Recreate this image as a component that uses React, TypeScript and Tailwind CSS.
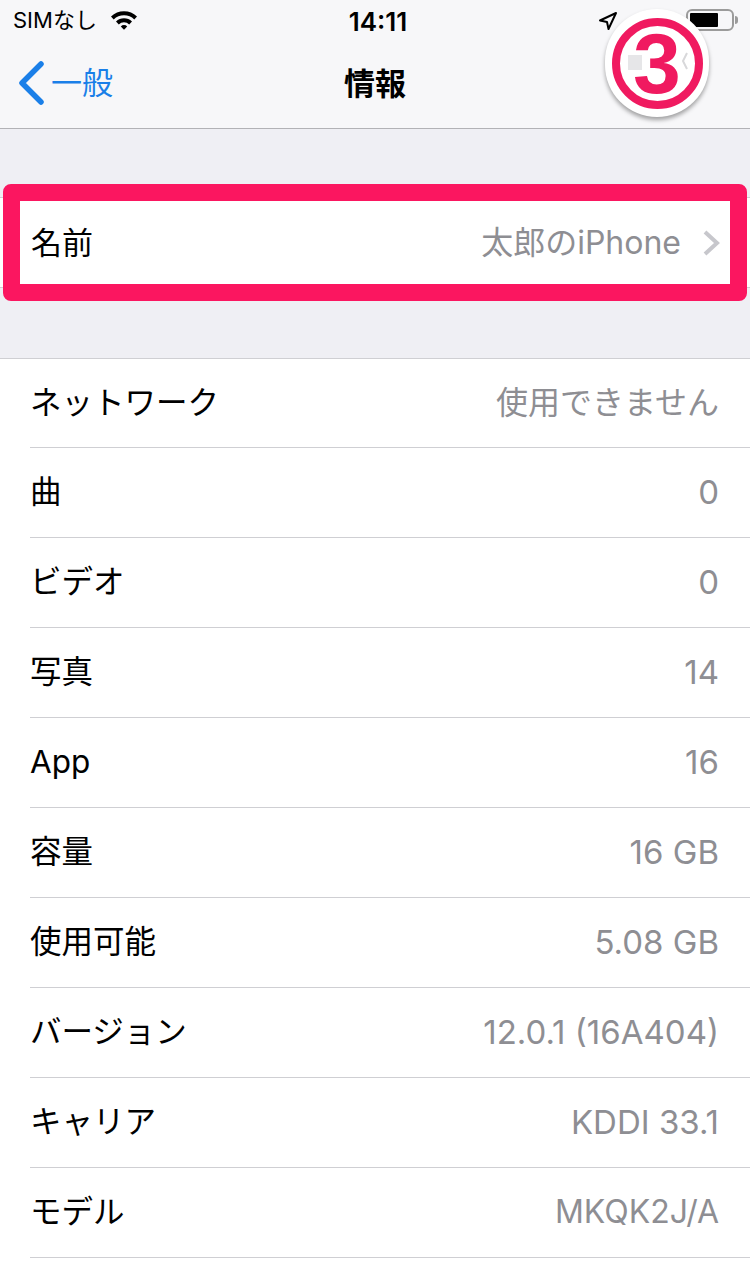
const font = { fontFamily: '"Inter", "Noto Sans CJK JP", sans-serif' };

const rows = [
  ["ネットワーク", "使用できません", "text-[32px]"],
  ["曲", "0", "text-[33px]"],
  ["ビデオ", "0", "text-[33px]"],
  ["写真", "14", "text-[33px]"],
  ["App", "16", "text-[33px]"],
  ["容量", "16 GB", "text-[33px]"],
  ["使用可能", "5.08 GB", "text-[33px]"],
  ["バージョン", "12.0.1 (16A404)", "text-[33px]"],
  ["キャリア", "KDDI 33.1", "text-[33px]"],
  ["モデル", "MKQK2J/A", "text-[32px]"],
];

function Wifi() {
  return (
    <svg width="28" height="22" viewBox="0 0 28 22">
      <path d="M1 7.5 A19 19 0 0 1 27 7.5 L24.3 10.4 A15 15 0 0 0 3.7 10.4 Z" fill="#000" />
      <path d="M6 12.5 A11.5 11.5 0 0 1 22 12.5 L19.2 15.4 A7.5 7.5 0 0 0 8.8 15.4 Z" fill="#000" />
      <path d="M10.8 17.4 A4.6 4.6 0 0 1 17.2 17.4 L14 20.8 Z" fill="#000" />
    </svg>
  );
}

function Battery() {
  return (
    <div className="flex items-center gap-[1px]">
      <div className="w-[48px] h-[22px] rounded-[6px] border-2 border-[#9b9b9b] p-[2px]">
        <div className="w-[28px] h-full bg-black rounded-[1px]" />
      </div>
      <div className="w-[3px] h-[8px] bg-[#9b9b9b] rounded-r-sm" />
    </div>
  );
}

function Badge() {
  return (
    <div className="absolute left-[605px] top-[9px] w-[104px] h-[108px] rounded-full bg-white shadow-[0_3px_4px_rgba(0,0,0,0.35)] flex items-center justify-center">
      <div className="relative w-[91px] h-[91px] rounded-full border-[8px] border-[#f01a60] flex items-center justify-center">
        {/* what is left of the status bar under the sticker */}
        <div className="absolute left-[8px] top-[29px] w-[14px] h-[15px] bg-[#e6e6e8]" />
        <svg className="absolute left-[61px] top-[26px]" width="8" height="18" viewBox="0 0 8 18">
          <path d="M6 1 L2 9 L6 17" fill="none" stroke="#d8d8da" strokeWidth="2" />
        </svg>
        <span className="relative text-[#f01a60] text-[86px] font-bold leading-none" style={{ fontFamily: '"Liberation Sans", sans-serif' }}>3</span>
      </div>
    </div>
  );
}

export default function App() {
  return (
    <div className="relative w-[750px] h-[1270px] overflow-hidden bg-[#efeff4] flex flex-col" style={font}>
      <div className="bg-[#f7f7f9] h-[129px] border-b border-[#b2b2b6] flex flex-col">
        <div className="relative h-[40px] flex items-center pl-[13px] text-black">
          <span className="text-[22px] leading-none">SIMなし</span>
          <span className="ml-[13px] mt-[-1px]"><Wifi /></span>
          <span className="absolute left-[6px] right-0 top-[9px] text-center text-[26px] leading-none font-semibold">14:11</span>
          <svg className="absolute left-[598px] top-[11px]" width="20" height="20" viewBox="0 0 20 20">
            <path d="M2 9.5 L18 2 L10.5 18 L9 11 Z" fill="none" stroke="#000" strokeWidth="2" strokeLinejoin="round" />
          </svg>
          <div className="absolute left-[686px] top-[9px]"><Battery /></div>
        </div>
        <div className="relative flex-1 flex items-center pb-[3px]">
          <svg className="ml-[17px]" width="28" height="44" viewBox="0 0 28 44">
            <path d="M24 3 L5 22 L24 41" fill="none" stroke="#1a7fe8" strokeWidth="5.5" strokeLinecap="round" strokeLinejoin="round" />
          </svg>
          <span className="ml-[6px] text-[31px] leading-none text-[#1a7fe8]">一般</span>
          <span className="absolute left-0 right-0 top-[28px] text-center text-[31px] leading-none font-semibold text-black">情報</span>
        </div>
      </div>

      <div className="mt-[68px] bg-white h-[91px] border-y border-[#cfcfd3] flex items-center pl-[31px] pr-[30px]">
        <span className="flex-1 text-[31px] leading-none text-black">名前</span>
        <span className="text-[32px] leading-none text-[#8e8e93]">太郎のiPhone</span>
        <svg className="ml-[21px]" width="18" height="28" viewBox="0 0 18 28">
          <path d="M3 3 L15 14 L3 25" fill="none" stroke="#c7c7cc" strokeWidth="4" />
        </svg>
      </div>

      <div className="mt-[70px] flex-1 bg-white border-t border-[#cfcfd3]">
        {rows.map(([label, value, size]) => (
          <div key={label} className="ml-[30px] h-[90px] first:h-[89px] border-b border-[#cfcfd3] flex items-center justify-between pr-[31px] pb-[1px]">
            <span className="text-[31.5px] leading-none text-black">{label}</span>
            <span className={`${size} leading-none text-[#8e8e93]`}>{value}</span>
          </div>
        ))}
      </div>

      <div className="absolute left-[3px] top-[184px] w-[744px] h-[117px] rounded-[8px] border-[17px] border-[#fb1660]" />
      <Badge />
    </div>
  );
}
